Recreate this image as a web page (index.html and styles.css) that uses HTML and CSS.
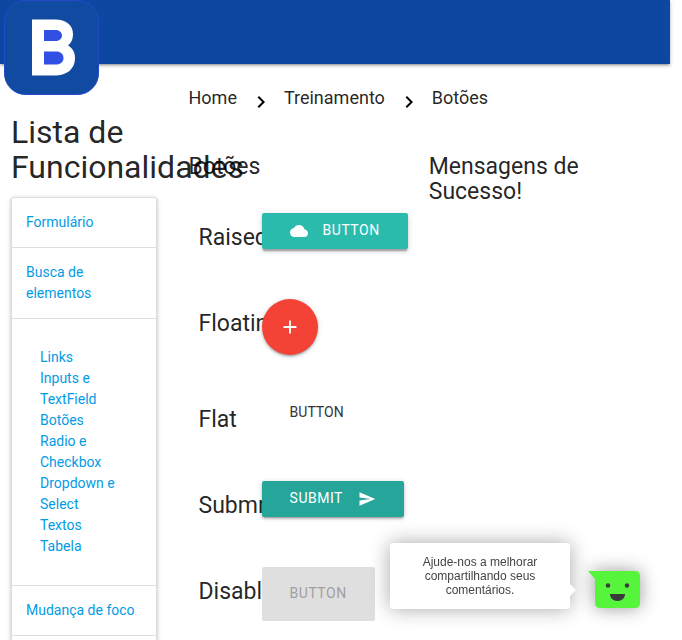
FILE: index.html
```html
<!DOCTYPE html>
<html lang="pt-BR">
<head>
<meta charset="utf-8">
<title>Botões</title>
<link rel="stylesheet" href="styles.css">
</head>
<body>
<header class="topbar">
  <a class="logo" href="#" aria-label="Início">
    <svg viewBox="0 0 95 95" aria-hidden="true">
      <rect x=".5" y=".5" width="94" height="94" rx="21" fill="#114ba1" stroke="#2449c9"/>
      <path fill="#fff" d="M28 19.500H51C62 19.500 69 25 69 34C69 39.500 67 43 64 45.500C68.500 48 71 52 71 58C71 69 63 75.500 51 75.500H28Z"/>
      <path fill="#324fe3" d="M40 30H51C55 30 58 32 58 35.500S55 41 51 41H40ZM40 51.500H52C56.500 51.500 59.500 54 59.500 58S56.500 64.500 52 64.500H40Z"/>
    </svg>
  </a>
</header>
<div class="layout">
  <aside class="sidebar">
    <h1 class="sidebar-title">Lista de Funcionalidades</h1>
    <ul class="menu">
      <li class="menu-item"><a href="#">Formulário</a></li>
      <li class="menu-item"><a href="#">Busca de elementos</a></li>
      <li class="submenu">
        <ul class="submenu-list">
          <li><a href="#">Links</a></li>
          <li><a href="#">Inputs e TextField</a></li>
          <li><a href="#">Botões</a></li>
          <li><a href="#">Radio e Checkbox</a></li>
          <li><a href="#">Dropdown e Select</a></li>
          <li><a href="#">Textos</a></li>
          <li><a href="#">Tabela</a></li>
        </ul>
      </li>
      <li class="menu-item"><a href="#">Mudança de foco</a></li>
      <li class="menu-item"></li>
    </ul>
  </aside>
  <main class="content">
    <nav class="breadcrumb" aria-label="Trilha">
      <a href="#">Home</a>
      <svg class="chevron" viewBox="0 0 24 24" aria-hidden="true"><path d="M10 6L8.590 7.410 13.170 12l-4.580 4.590L10 18l6-6z"/></svg>
      <a href="#">Treinamento</a>
      <svg class="chevron" viewBox="0 0 24 24" aria-hidden="true"><path d="M10 6L8.590 7.410 13.170 12l-4.580 4.590L10 18l6-6z"/></svg>
      <a href="#">Botões</a>
    </nav>
    <div class="columns">
      <section class="column">
        <h2 class="heading">Botões</h2>
        <div class="samples">
          <div class="sample">
            <h3 class="heading sample-label">Raised</h3>
            <button class="btn btn-raised" type="button">
              <svg class="icon" viewBox="0 0 24 24" aria-hidden="true"><path d="M19.350 10.040C18.670 6.590 15.640 4 12 4 9.110 4 6.600 5.640 5.350 8.040 2.340 8.360 0 10.910 0 14c0 3.310 2.690 6 6 6h13c2.760 0 5-2.240 5-5 0-2.640-2.050-4.780-4.650-4.960z"/></svg>
              <span>BUTTON</span>
            </button>
          </div>
          <div class="sample">
            <h3 class="heading sample-label">Floating</h3>
            <button class="btn-floating" type="button" aria-label="Adicionar">
              <svg viewBox="0 0 24 24" aria-hidden="true"><path d="M19 13h-6v6h-2v-6H5v-2h6V5h2v6h6v2z"/></svg>
            </button>
          </div>
          <div class="sample">
            <h3 class="heading sample-label">Flat</h3>
            <button class="btn btn-flat" type="button">BUTTON</button>
          </div>
          <div class="sample">
            <h3 class="heading sample-label">Submmit</h3>
            <button class="btn btn-submit" type="submit">
              <span>SUBMIT</span>
              <svg class="icon" viewBox="0 0 24 24" aria-hidden="true"><path d="M2.010 21L23 12 2.010 3 2 10l15 2-15 2z"/></svg>
            </button>
          </div>
          <div class="sample">
            <h3 class="heading sample-label">Disabled</h3>
            <button class="btn btn-disabled" type="button" disabled>BUTTON</button>
          </div>
        </div>
      </section>
      <section class="column">
        <h2 class="heading">Mensagens de Sucesso!</h2>
      </section>
    </div>
  </main>
</div>
<div class="feedback">
  <p class="feedback-tip">Ajude-nos a melhorar compartilhando seus comentários.</p>
  <button class="feedback-button" type="button" aria-label="Comentários">
    <svg viewBox="0 0 52 37" aria-hidden="true">
      <path fill="#56f53b" d="M0 0H47Q52 0 52 5V32Q52 37 47 37H12Q7 37 7 32V8Z"/>
      <circle cx="20" cy="14.500" r="2.200" fill="#3a3a3a"/>
      <circle cx="39" cy="14.500" r="2.200" fill="#3a3a3a"/>
      <path fill="#3a3a3a" d="M22 23H37C37 27 34 30 29.500 30S22 27 22 23Z"/>
    </svg>
  </button>
</div>
</body>
</html>
```
FILE: styles.css
```css
* {
  box-sizing: border-box;
}

body {
  margin: 0;
  padding-right: 12px;
  height: 100vh;
  overflow: hidden;
  background: #fff;
  color: rgba(0, 0, 0, 0.87);
  font: 14px/21px Roboto, sans-serif;
}

h1, h2, h3, p, ul {
  margin: 0;
  padding: 0;
  font-weight: 400;
}

ul {
  list-style: none;
}

a {
  color: #039be5;
  text-decoration: none;
}

button {
  border: 0;
  font: inherit;
  cursor: pointer;
}

svg {
  display: block;
}

.topbar {
  position: relative;
  height: 64px;
  background: #0d47a1;
  box-shadow: 0 2px 2px 0 rgba(0, 0, 0, 0.14), 0 3px 1px -2px rgba(0, 0, 0, 0.12), 0 1px 5px 0 rgba(0, 0, 0, 0.2);
}

.logo {
  position: absolute;
  top: 0;
  left: 4px;
  width: 95px;
}

.layout {
  display: grid;
  grid-template-columns: minmax(0, 1fr) minmax(0, 3fr);
}

.sidebar {
  padding: 51px 11px 0;
}

.sidebar-title {
  margin-bottom: 12px;
  font-size: 32px;
  line-height: 35px;
}

.menu {
  border: 1px solid #ddd;
  border-radius: 2px;
  box-shadow: 0 2px 2px 0 rgba(0, 0, 0, 0.14), 0 3px 1px -2px rgba(0, 0, 0, 0.12), 0 1px 5px 0 rgba(0, 0, 0, 0.2);
}

.menu-item {
  min-height: 50px;
  padding: 14px;
  border-bottom: 1px solid #ddd;
}

.submenu {
  padding: 28px;
  border-bottom: 1px solid #ddd;
}

.submenu-list a {
  display: block;
}

.content {
  padding: 22px 12px 0 10px;
}

.breadcrumb {
  display: flex;
  align-items: flex-start;
  height: 68px;
  padding-left: 11px;
}

.breadcrumb a {
  color: rgba(0, 0, 0, 0.87);
  font-size: 18px;
  line-height: 24px;
}

.chevron {
  width: 24px;
  height: 24px;
  margin: 4px 11px 0 12px;
}

.columns {
  display: grid;
  grid-template-columns: repeat(2, minmax(0, 1fr));
}

.column {
  padding: 0 10px 0 11px;
}

.heading {
  font-size: 23px;
  line-height: 25px;
}

.samples {
  display: grid;
  gap: 40px;
  margin-top: 34px;
}

.sample {
  display: grid;
  grid-template-columns: minmax(0, 1fr) minmax(0, 2fr);
  align-items: start;
  justify-items: start;
  min-height: 46px;
}

.sample-label {
  padding: 12px 10px 0;
}

.btn {
  position: relative;
  display: flex;
  gap: 15px;
  height: 36px;
  padding: 0 28px;
  border-radius: 2px;
  color: #fff;
  letter-spacing: 0.5px;
  line-height: 34px;
  white-space: nowrap;
}

.icon {
  width: 18px;
  height: 36px;
  fill: #fff;
}

.btn-raised {
  background: #2bbbad;
  box-shadow: 0 3px 3px 0 rgba(0, 0, 0, 0.14), 0 1px 7px 0 rgba(0, 0, 0, 0.12), 0 3px 1px -1px rgba(0, 0, 0, 0.2);
}

.btn-submit {
  background: #26a69a;
  box-shadow: 0 2px 2px 0 rgba(0, 0, 0, 0.14), 0 3px 1px -2px rgba(0, 0, 0, 0.12), 0 1px 5px 0 rgba(0, 0, 0, 0.2);
}

.btn-flat {
  background: transparent;
  color: #343434;
  letter-spacing: normal;
}

.btn-disabled {
  height: 54px;
  background: #dfdfdf;
  color: #9f9f9f;
  line-height: 52px;
}

.btn-floating {
  position: relative;
  display: grid;
  place-items: center;
  width: 56px;
  height: 56px;
  padding: 0;
  border-radius: 50%;
  background: #f44336;
  box-shadow: 0 2px 2px 0 rgba(0, 0, 0, 0.14), 0 3px 1px -2px rgba(0, 0, 0, 0.12), 0 1px 5px 0 rgba(0, 0, 0, 0.2);
}

.btn-floating svg {
  width: 22px;
  fill: #fff;
}

.feedback {
  position: fixed;
  right: 42px;
  bottom: 31px;
  display: flex;
  align-items: flex-end;
  gap: 18px;
}

.feedback-tip {
  position: relative;
  width: 180px;
  padding: 12px 28px;
  border-radius: 3px;
  background: #fff;
  box-shadow: 0 0 20px rgba(0, 0, 0, 0.35);
  color: #444;
  font: 12px/14px "Liberation Sans", sans-serif;
  text-align: center;
}

.feedback-tip::after {
  content: "";
  position: absolute;
  top: 41px;
  left: 100%;
  border: 6px solid transparent;
  border-right-width: 0;
  border-left-color: #fff;
}

.feedback-button {
  width: 52px;
  margin-bottom: 1px;
  padding: 0;
  background: none;
}

.feedback-button svg {
  overflow: visible;
  filter: drop-shadow(0 0 9px rgba(0, 0, 0, 0.4));
}
```
